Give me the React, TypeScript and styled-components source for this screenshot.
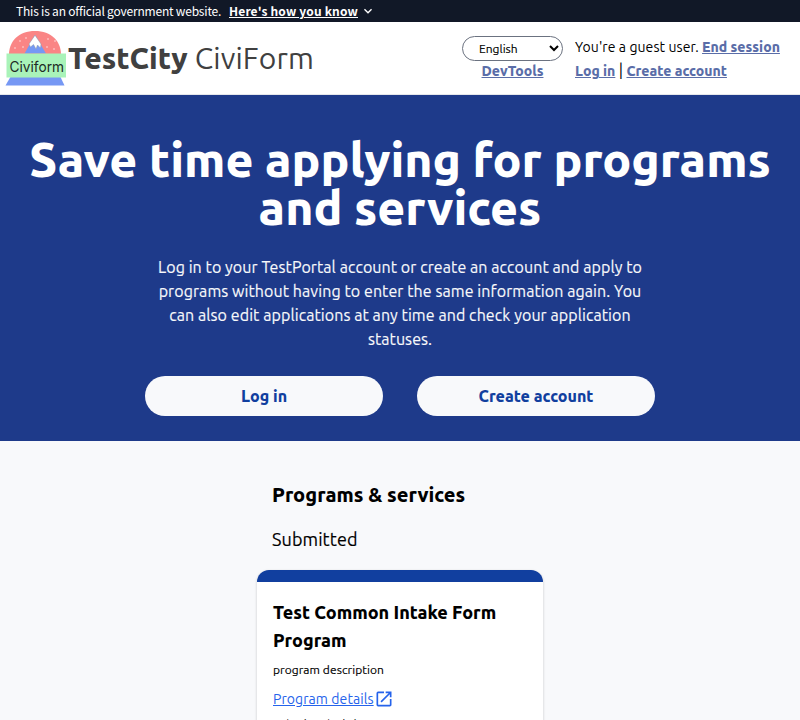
import React from "react";
import styled, { createGlobalStyle } from "styled-components";
import { MdOpenInNew, MdExpandMore } from "react-icons/md";

const GlobalStyle = createGlobalStyle`
  *, *::before, *::after { box-sizing: border-box; }
  html, body { margin: 0; height: 720px; overflow: hidden; }
  body {
    background: #f8f9fb;
    color: #000;
    font-family: "Ubuntu", "Noto Sans", sans-serif;
    font-size: 16px;
    line-height: 24px;
  }
  h1, h2, h3, p { margin: 0; }
`;

const Page = styled.div`
  width: 100%;
  height: 720px;
  overflow: hidden;
`;

const Banner = styled.div`
  display: flex;
  align-items: center;
  height: 22px;
  padding-left: 16px;
  background: #111827;
  color: #fff;
  font-family: "Noto Sans CJK SC", "Noto Sans", sans-serif;
  font-size: 12px;
  line-height: 22px;
  white-space: nowrap;
`;

const BannerText = styled.span`
  width: 213px;
  letter-spacing: -0.2px;
`;

const BannerLink = styled.a`
  font-weight: 700;
  letter-spacing: 0.16px;
  text-decoration: underline;
`;

const Chevron = styled(MdExpandMore)`
  width: 16px;
  height: 16px;
  margin-left: 2px;
`;

const Header = styled.header`
  display: flex;
  height: 73px;
  background: #fff;
  border-bottom: 1px solid #e5e7eb;
`;

const Logo = styled.svg`
  width: 64px;
  height: 64px;
  margin: 4px 0 0 4px;
  flex: none;
`;

const Brand = styled.div`
  flex: 1;
  color: #404040;
  font-size: 30px;
  line-height: 36px;
  padding-top: 18px;
  letter-spacing: 0.15px;
  white-space: nowrap;
`;

const BrandCity = styled.b`
  font-weight: 800;
  letter-spacing: 0;
`;

const Controls = styled.div`
  display: flex;
  flex-direction: column;
  align-items: center;
  width: 101px;
  padding-top: 14px;
  font-size: 14px;
  line-height: 20px;
`;

const Language = styled.select`
  width: 101px;
  height: 25px;
  padding: 0 0 0 12px;
  border: 1px solid #6b7280;
  border-radius: 13px;
  background: #fff;
  color: #000;
  font: 12px/16px "Ubuntu", "Noto Sans", sans-serif;
  -webkit-text-stroke: 0.15px;
`;

const Account = styled.div`
  width: 225px;
  margin-left: 12px;
  padding-top: 13px;
  font-size: 14px;
  letter-spacing: 0.08px;
  white-space: nowrap;
`;

const AccountLine = styled.div`
  height: 24px;
  line-height: 24px;
`;

const HeaderLink = styled.a`
  color: #5a6da8;
  font-weight: 800;
  letter-spacing: 0;
  text-decoration: underline;
`;

const Divider = styled.span`
  font-size: 16px;
  line-height: 20px;
  letter-spacing: 0.2px;
`;

const Hero = styled.section`
  display: flex;
  flex-direction: column;
  align-items: center;
  height: 346px;
  padding-top: 40px;
  background: #1e3a8a;
  color: #f8f9fb;
  text-align: center;
`;

const HeroTitle = styled.h1`
  color: #fff;
  font-size: 48px;
  line-height: 48px;
  font-weight: 800;
  white-space: nowrap;
`;

const HeroText = styled.p`
  width: 510px;
  margin-top: 24px;
  letter-spacing: 0.08px;
  -webkit-text-stroke: 0.15px;
`;

const Actions = styled.div`
  display: flex;
  gap: 34px;
  margin-top: 25px;
`;

const Pill = styled.button`
  width: 238px;
  height: 40px;
  padding: 0;
  border: 0;
  border-radius: 20px;
  background: #f8f9fb;
  color: #113f9f;
  font: 800 16px/24px "Ubuntu", "Noto Sans", sans-serif;
`;

const Programs = styled.main`
  width: 286px;
  margin: 0 auto;
  padding-top: 40px;
`;

const ProgramsTitle = styled.h2`
  padding-left: 15px;
  font-size: 20px;
  line-height: 28px;
  font-weight: 800;
`;

const Status = styled.h3`
  margin-top: 16px;
  padding-left: 15px;
  font-size: 18px;
  line-height: 28px;
  font-weight: 400;
  letter-spacing: 0.09px;
  -webkit-text-stroke: 0.15px;
`;

const Card = styled.article`
  height: 300px;
  margin-top: 17px;
  padding: 16px 16px 0;
  border-top: 12px solid #113f9f;
  border-radius: 12px;
  background: #fff;
  box-shadow: 0 1px 3px rgba(0, 0, 0, 0.2);
`;

const CardTitle = styled.h3`
  font-size: 18px;
  line-height: 28px;
  font-weight: 800;
`;

const Description = styled.p`
  margin-top: 8px;
  font-size: 12px;
  line-height: 16px;
  letter-spacing: 0.07px;
  -webkit-text-stroke: 0.15px;
`;

const Details = styled.a`
  display: flex;
  align-items: center;
  margin-top: 11px;
  color: #2563eb;
  font-size: 14px;
  line-height: 20px;
  letter-spacing: 0.08px;
  text-decoration: underline;
`;

const Submitted = styled.p`
  margin-top: 7px;
  font-size: 12px;
  line-height: 16px;
  letter-spacing: 0.07px;
`;

const CiviformLogo = () => (
  <Logo viewBox="0 0 64 64">
    <path d="M5 31C4 15 15 5 31 5S58 15 57 31Z" fill="#fa8585" />
    <path d="M20.500 27.500 31 9 42 27.500Z" fill="#7698f4" />
    <path d="M25 18 31 9.200 37 18 36.500 22 33.500 19 32 23 29.500 18.500 26.500 21Z" fill="#fff" stroke="#8996a8" strokeWidth=".5" />
    <g fill="#ffe1e1">
      <circle cx="11" cy="22" r=".8" /><circle cx="16" cy="15" r=".8" /><circle cx="22" cy="12" r=".8" />
      <circle cx="19" cy="21" r=".8" /><circle cx="44" cy="13" r=".8" /><circle cx="43" cy="21" r=".8" />
      <circle cx="51" cy="15" r=".8" /><circle cx="50" cy="23" r=".8" />
    </g>
    <path d="M7 50H56L60.500 59.500H1.500Z" fill="#7698f4" />
    <rect x="2.500" y="27.500" width="59.500" height="24" fill="#a9f3b9" />
    <text x="5.500" y="45.500" fill="#202a25" fontFamily="Inter, sans-serif" fontSize="14.5" textLength="54.500" lengthAdjust="spacingAndGlyphs">Civiform</text>
  </Logo>
);

export default function App() {
  return (
    <Page>
      <GlobalStyle />
      <Banner>
        <BannerText>This is an official government website.</BannerText>
        <BannerLink>Here's how you know</BannerLink>
        <Chevron />
      </Banner>
      <Header>
        <CiviformLogo />
        <Brand><BrandCity>TestCity</BrandCity> CiviForm</Brand>
        <Controls>
          <Language defaultValue="en"><option value="en">English</option></Language>
          <HeaderLink>DevTools</HeaderLink>
        </Controls>
        <Account>
          <AccountLine>You're a guest user. <HeaderLink>End session</HeaderLink></AccountLine>
          <AccountLine><HeaderLink>Log in</HeaderLink> <Divider>|</Divider> <HeaderLink>Create account</HeaderLink></AccountLine>
        </Account>
      </Header>
      <Hero>
        <HeroTitle>Save time applying for programs<br />and services</HeroTitle>
        <HeroText>
          Log in to your TestPortal account or create an account and apply to
          programs without having to enter the same information again. You
          can also edit applications at any time and check your application
          statuses.
        </HeroText>
        <Actions>
          <Pill>Log in</Pill>
          <Pill>Create account</Pill>
        </Actions>
      </Hero>
      <Programs>
        <ProgramsTitle>Programs &amp; services</ProgramsTitle>
        <Status>Submitted</Status>
        <Card>
          <CardTitle>Test Common Intake Form Program</CardTitle>
          <Description>program description</Description>
          <Details>Program details<MdOpenInNew size={20} /></Details>
          <Submitted>Submitted 1/1/30</Submitted>
        </Card>
      </Programs>
    </Page>
  );
}
